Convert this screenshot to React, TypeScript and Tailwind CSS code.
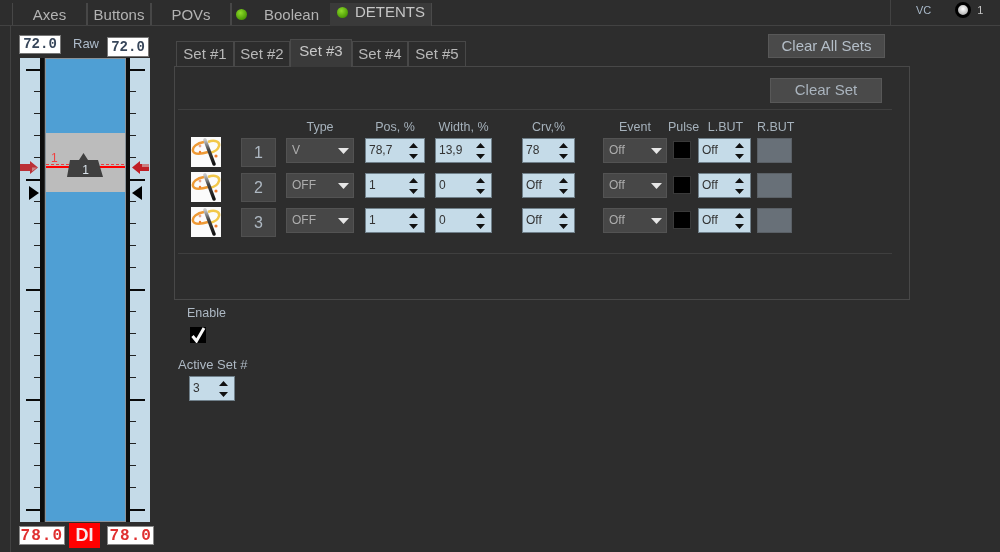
const ticks = Array.from({ length: 21 }, (_, i) => 12 + i * 22);

const rows = [
  { num: '1', type: 'V', pos: '78,7', width: '13,9', crv: '78' },
  { num: '2', type: 'OFF', pos: '1', width: '0', crv: 'Off' },
  { num: '3', type: 'OFF', pos: '1', width: '0', crv: 'Off' },
];

const Led = () => (
  <span className="w-[11px] h-[11px] rounded-full bg-[radial-gradient(circle_at_40%_35%,#8fdc2a,#4c9a06_70%,#2f6a04)]" />
);

const Spinner = ({ value, className }: { value: string; className: string }) => (
  <div className={`h-[25px] flex items-center justify-between pl-[3px] pr-[6px] bg-[#c5dbe8] border border-[#70808a] text-[12px] text-[#333] ${className}`}>
    <span className="-mt-[2px]">{value}</span>
    <svg width="9" height="16" viewBox="0 0 9 16">
      <path d="M4.5 0 L9 5 H0 Z M0 11 H9 L4.5 16 Z" fill="#111" />
    </svg>
  </div>
);

const Select = ({ value, className }: { value: string; className: string }) => (
  <div className={`h-[25px] flex items-center justify-between pl-[5px] pr-[4px] bg-[#474747] border border-[#535353] text-[12px] text-[#adadad] ${className}`}>
    <span className="-mt-[2px]">{value}</span>
    <svg width="11" height="6" viewBox="0 0 11 6">
      <path d="M0 0 H11 L5.5 6 Z" fill="#e6e6e6" />
    </svg>
  </div>
);

const Wand = ({ id }: { id: string }) => (
  <svg width="30" height="30" viewBox="0 0 30 30" className="shrink-0">
    <defs>
      <linearGradient id={id} x1="0" y1="0" x2="0" y2="1">
        <stop offset="0" stopColor="#c8c8c8" />
        <stop offset="0.4" stopColor="#444" />
        <stop offset="1" stopColor="#111" />
      </linearGradient>
    </defs>
    <rect width="30" height="30" fill="#fbfbfb" />
    <path d="M13 5 C6 6 1 10 2 14 C3 18 11 17 17 15" fill="none" stroke="#ee9a35" strokeWidth="2.500" />
    <path d="M17 5 C24 2 29 5 28 9 C27 13 23 15 19 16" fill="none" stroke="#f2c84a" strokeWidth="2.500" />
    <path d="M14 3 L23 27" stroke={`url(#${id})`} strokeWidth="3.500" strokeLinecap="round" />
    <circle cx="25" cy="19" r="1.600" fill="#ee7b2c" />
    <circle cx="9" cy="9" r="1.400" fill="#e8a58a" />
    <circle cx="9" cy="15" r="1.200" fill="#ee7b2c" />
  </svg>
);

const LeftStrip = () => (
  <svg width="20" height="464" viewBox="0 0 20 464" className="bg-[#c5dbe8] shrink-0">
    {ticks.map((y, i) => (
      <rect key={y} x={i % 5 === 0 ? 6 : 14} y={y - 1} width={i % 5 === 0 ? 14 : 6} height={i % 5 === 0 ? 2 : 1} fill={i % 5 === 0 ? '#0a0a0a' : '#222'} />
    ))}
    <path d="M0 106 H10 V103 L18 109.500 L10 116 V113 H0 Z" fill="#bb3036" />
    <path d="M12 109.500 H17 L12 113.500 Z" fill="#c98183" />
    <path d="M9 128 L19 135 L9 142 Z" fill="#000" />
  </svg>
);

const RightStrip = () => (
  <svg width="20" height="464" viewBox="0 0 20 464" className="bg-[#c5dbe8] shrink-0">
    {ticks.map((y, i) => (
      <rect key={y} x="0" y={y - 1} width={i % 5 === 0 ? 15 : 6} height={i % 5 === 0 ? 2 : 1} fill={i % 5 === 0 ? '#0a0a0a' : '#222'} />
    ))}
    <path d="M19 106 H10 V103 L2 109.500 L10 116 V113 H19 Z" fill="#c01f26" />
    <rect x="12" y="106" width="7" height="3" fill="#c98183" />
    <path d="M12 128 L2 135 L12 142 Z" fill="#000" />
  </svg>
);

const Gauge = () => (
  <div className="flex h-[464px] ml-px">
    <LeftStrip />
    <div className="w-[4px] bg-[#0d0d0d] mr-px" />
    <div className="relative w-[81px] flex flex-col border border-[#8a9298]">
      <div className="h-[74px] bg-[#4f9fd4]" />
      <div className="h-[59px] bg-[#bcbcbc]" />
      <div className="flex-1 bg-[#4f9fd4]" />
      {/* detent marker */}
      <div className="absolute left-0 right-0 top-[92px] h-[30px]">
        <span className="absolute left-[5px] top-0 text-[12px] leading-[14px] text-[#f04040]">1</span>
        <svg width="79" height="30" viewBox="0 0 79 30" className="absolute left-0 top-0">
          <path d="M0 13.500 H79" stroke="#f23a3a" strokeWidth="1" strokeDasharray="3 2" />
          <rect x="0" y="15" width="79" height="2" fill="#f00" />
          <path d="M21 26 L24 9 H33 L37.500 2 L42 9 H52 L57 26 Z" fill="#3f3f3f" />
        </svg>
        <span className="absolute left-0 right-0 top-[12px] text-center text-[12px] leading-[14px] text-[#d9e2ea]">1</span>
      </div>
    </div>
    <div className="w-[4px] bg-[#0d0d0d]" />
    <RightStrip />
  </div>
);

const setTabs = [
  { label: 'Set #1', w: 'w-[58px]' },
  { label: 'Set #2', w: 'w-[56px]' },
  { label: 'Set #3', w: 'w-[62px]' },
  { label: 'Set #4', w: 'w-[56px]' },
  { label: 'Set #5', w: 'w-[58px]' },
];

export default function App() {
  return (
    <div className="w-[1000px] h-[552px] overflow-hidden bg-[#2d2d2d] blur-[0.4px] font-['Liberation_Sans',sans-serif]">
      {/* top tabs */}
      <div className="h-[26px] flex items-end pl-[12px] border-b border-[#424242] text-[15px] text-[#b3b3b3]">
        <div className="w-[74px] h-[22px] flex items-center justify-center pt-[2px] border-l border-[#474747]">Axes</div>
        <div className="w-[64px] h-[22px] flex items-center justify-center pt-[2px] border-l-2 border-[#474747]">Buttons</div>
        <div className="w-[80px] h-[22px] flex items-center justify-center pt-[2px] border-l-2 border-[#474747]">POVs</div>
        <div className="w-[100px] h-[22px] flex items-center gap-[17px] pl-[4px] border-l-2 border-[#474747]">
          <Led />
          <span className="mt-[2px]">Boolean</span>
        </div>
        <div className="w-[102px] h-[23px] -mb-px flex items-center gap-[7px] pl-[7px] pb-[4px] bg-[#3a3a3a] border-r border-[#4a4a4a] text-[#c6c6c6]">
          <Led />
          <span>DETENTS</span>
        </div>
        <div className="ml-auto w-[110px] h-[26px] flex items-center border-l border-[#424242] text-[11px] text-[#a8b8c8]">
          <span className="ml-[25px] -mt-[4px]">VC</span>
          <span className="ml-[24px] -mt-[4px] w-[16px] h-[16px] rounded-full border-[3px] border-black bg-[radial-gradient(circle_at_50%_40%,#ffffff,#9a9a9a)]" />
          <span className="ml-[6px] -mt-[4px] text-[#c4c4c4]">1</span>
        </div>
      </div>

      <div className="flex ml-[10px] h-[526px] border-l border-[#424242]">
        {/* gauge column */}
        <div className="w-[143px] pl-[8px] pt-[9px] shrink-0">
          <div className="h-[23px] flex items-start">
            <div className="w-[42px] h-[19px] flex items-center justify-center bg-white border border-[#777] font-['Liberation_Mono',monospace] font-bold text-[14px] text-[#37465a]">72.0</div>
            <span className="ml-[12px] text-[13px] leading-[18px] text-[#aebccb]">Raw</span>
            <div className="ml-[8px] mt-[2px] w-[42px] h-[20px] flex items-center justify-center bg-white border border-[#777] font-['Liberation_Mono',monospace] font-bold text-[14px] text-[#37465a]">72.0</div>
          </div>
          <Gauge />
          <div className="flex items-start mt-px">
            <div className="mt-[3px] w-[46px] h-[19px] flex items-center justify-center bg-white border border-[#888] font-['Liberation_Mono',monospace] font-bold tracking-[1px] text-[16px] text-[#e03030]">78.0</div>
            <div className="ml-[4px] w-[32px] h-[25px] flex items-center justify-center bg-[#ff0000] font-bold text-[18px] text-[#f4e8ec]">DI</div>
            <div className="ml-[7px] mt-[3px] w-[47px] h-[19px] flex items-center justify-center bg-white border border-[#888] font-['Liberation_Mono',monospace] font-bold tracking-[1px] text-[16px] text-[#e03030]">78.0</div>
          </div>
        </div>

        {/* right content */}
        <div className="w-[736px] ml-[20px] pt-[8px]">
          <div className="h-[32px] flex items-end justify-between">
            <div className="flex items-end pl-[2px] text-[15px] text-[#b8b8b8]">
              {setTabs.map((t) =>
                t.label === 'Set #3' ? (
                  <div key={t.label} className={`${t.w} h-[28px] pb-[4px] -mb-px flex items-center justify-center bg-[#3a3a3a] border border-b-0 border-[#4a4a4a] text-[#c8c8c8]`}>{t.label}</div>
                ) : (
                  <div key={t.label} className={`${t.w} h-[25px] flex items-center justify-center border border-b-0 border-[#484848]`}>{t.label}</div>
                )
              )}
            </div>
            <div className="mr-[25px] mb-[8px] w-[117px] h-[24px] flex items-center justify-center bg-[#4a4a4a] border border-[#585858] text-[15px] text-[#b4bec8]">Clear All Sets</div>
          </div>

          <div className="h-[234px] border border-[#484848] pl-[3px] pt-[11px]">
            <div className="flex justify-end pr-[27px]">
              <div className="w-[112px] h-[25px] flex items-center justify-center bg-[#4a4a4a] border border-[#585858] text-[15px] text-[#aab4be]">Clear Set</div>
            </div>
            <div className="mt-[6px] w-[714px] h-[145px] border-y border-[#3f3f3f] pl-[13px]">
              {/* column heads */}
              <div className="h-[27px] flex items-center text-[12.500px] text-[#a6b2bc] pt-[8px]">
                <span className="ml-[95px] w-[68px] text-center">Type</span>
                <span className="ml-[11px] w-[60px] text-center">Pos, %</span>
                <span className="ml-[10px] w-[57px] text-center">Width, %</span>
                <span className="ml-[30px] w-[53px] text-center">Crv,%</span>
                <span className="ml-[28px] w-[64px] text-center">Event</span>
                <span className="ml-[1px] w-[30px] text-center whitespace-nowrap">Pulse</span>
                <span className="ml-[1px] w-[53px] text-center">L.BUT</span>
                <span className="ml-[5px] w-[36px] text-center">R.BUT</span>
              </div>
              <div className="flex flex-col">
                {rows.map((r) => (
                  <div key={r.num} className="h-[35px] flex items-start">
                    <Wand id={`wand-${r.num}`} />
                    <div className="ml-[20px] mt-px w-[35px] h-[29px] flex items-center justify-center bg-[#444444] border border-[#505050] text-[16px] text-[#aeb8c2]">{r.num}</div>
                    <Select value={r.type} className="ml-[10px] mt-px w-[68px]" />
                    <Spinner value={r.pos} className="ml-[11px] mt-px w-[60px]" />
                    <Spinner value={r.width} className="ml-[10px] mt-px w-[57px]" />
                    <Spinner value={r.crv} className="ml-[30px] mt-px w-[53px]" />
                    <Select value="Off" className="ml-[28px] mt-px w-[64px]" />
                    <div className="ml-[6px] mt-[4px] w-[18px] h-[18px] bg-black border border-[#3a3a3a]" />
                    <Spinner value="Off" className="ml-[7px] mt-px w-[53px]" />
                    <div className="ml-[6px] mt-px w-[35px] h-[25px] bg-[#687078] border border-[#5a6066]" />
                  </div>
                ))}
              </div>
            </div>
          </div>

          <div className="pl-[4px] pt-[5px] text-[12.500px] text-[#aeb9c4]">
            <div className="ml-[9px] leading-[16px]">Enable</div>
            <div className="ml-[12px] mt-[6px] w-[16px] h-[16px] bg-black flex items-center justify-center">
              <svg width="16" height="16" viewBox="0 0 16 16">
                <path d="M2.500 9 L6.500 14 L14 1" fill="none" stroke="#f8f8f8" strokeWidth="3" />
              </svg>
            </div>
            <div className="mt-[14px] leading-[16px] text-[13px]">Active Set #</div>
            <Spinner value="3" className="ml-[11px] mt-[3px] w-[46px]" />
          </div>
        </div>
      </div>
    </div>
  );
}
